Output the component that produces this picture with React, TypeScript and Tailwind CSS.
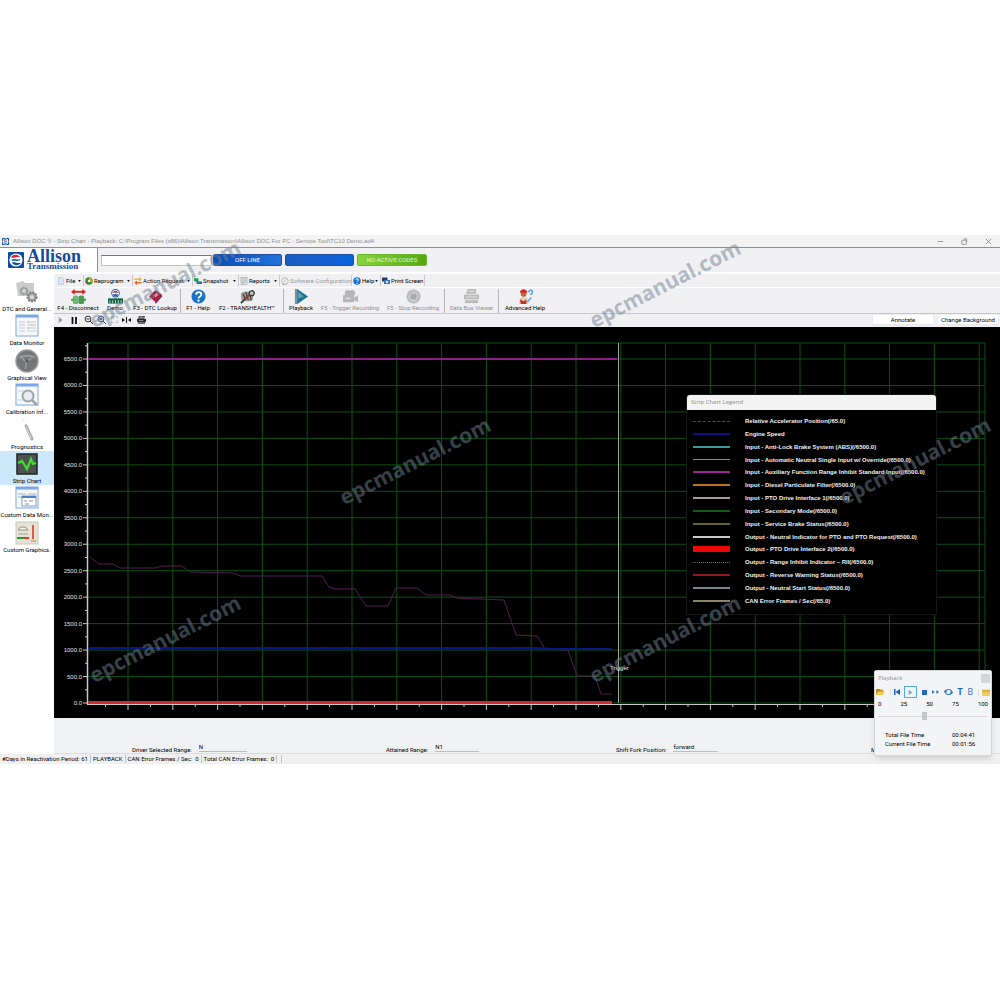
import React from "react";

function Watermark({ pos }: { pos: string }) {
  return (
    <span
      aria-hidden="true"
      className={
        "pointer-events-none absolute z-20 w-[180px] -translate-x-1/2 -translate-y-1/2 -rotate-[27deg] text-center font-['Noto_Sans'] text-[21px] leading-none font-bold whitespace-nowrap text-[#708090]/50 " +
        pos
      }
    >
      epcmanual.com
    </span>
  );
}

/* ---------- small drawings ---------- */

function Globe({ className }: { className: string }) {
  return (
    <svg viewBox="0 0 16 16" className={className}>
      <rect width="16" height="16" rx="1" fill="#0b4ea2" />
      <circle cx="8" cy="8" r="6.6" fill="#fff" />
      <path d="M3 5.500c2-4 8-3 9 0-3-1.600-5 1-9 0z" fill="#d8203a" />
      <path d="M4 10.500c2 4 8 3 9 0-3 1.600-6-1-9 0z" fill="#0b4ea2" />
      <path d="M4 8.500c2-2 5 1 8-1" stroke="#0b4ea2" strokeWidth="1.500" fill="none" />
    </svg>
  );
}

function Gears() {
  return (
    <svg viewBox="0 0 24 24" className="size-6 shrink-0">
      <path d="M1 3l7-2 2 2h9v13H3z" fill="#c9cac9" />
      <circle cx="9" cy="11" r="3.500" fill="#b4b6b6" stroke="#8b8d8d" strokeWidth="1.500" strokeDasharray="1.500 1" />
      <circle cx="9" cy="11" r="1.500" fill="#dcdcdc" />
      <circle cx="17" cy="17" r="4.500" fill="#9fa2a2" stroke="#7d7f7f" strokeWidth="2" strokeDasharray="2 1" />
      <circle cx="17" cy="17" r="2" fill="#ddd" />
    </svg>
  );
}

function Pane({ kind }: { kind: "list" | "search" | "nested" }) {
  return (
    <svg viewBox="0 0 24 24" className="size-6 shrink-0">
      <rect x="1" y="1" width="22" height="21" fill="#f5f7fb" stroke="#8fb4e6" strokeWidth="1.200" />
      <rect x="1" y="1" width="22" height="2.500" fill="#78a8ea" />
      {kind === "list" && (
        <g stroke="#c5c9d0">
          <path d="M4 8h6M4 11h6M4 14h6M4 17h6M12 8h9M12 11h9M12 14h9M12 17h9" />
          <path d="M12 8h2M16 11h2M12 14h3" stroke="#e4b877" />
        </g>
      )}
      {kind === "search" && (
        <g>
          <path d="M3 8h8M3 17h7" stroke="#c5c9d0" />
          <circle cx="13" cy="13" r="5.500" fill="#e9eef2" stroke="#a0a4a8" strokeWidth="2" />
          <path d="M17 17l5 5" stroke="#a0a4a8" strokeWidth="2.500" />
        </g>
      )}
      {kind === "nested" && (
        <g>
          <path d="M3 8h8M13 8h8M3 11h5" stroke="#a9aeb8" />
          <rect x="7" y="10" width="14" height="10" fill="#fff" stroke="#7d9cc9" />
          <path d="M7 11h14" stroke="#4e7fc6" strokeWidth="2" />
          <path d="M9 15h3M14 15h4M10 18h4" stroke="#8b94a3" />
        </g>
      )}
    </svg>
  );
}

function Gauge() {
  return (
    <svg viewBox="0 0 24 24" className="size-6 shrink-0">
      <circle cx="12" cy="12" r="11" fill="#747577" stroke="#98999b" strokeWidth="1.500" />
      <path d="M4 9c3-3 13-3 16 0M12 12l5-3M11.500 12l-1 8M6 8l4 4" stroke="#a2a4a6" strokeWidth="1.400" fill="none" />
      <circle cx="12" cy="12" r="1.600" fill="#55565a" />
    </svg>
  );
}

function Probe() {
  return (
    <svg viewBox="0 0 24 24" className="size-6 shrink-0">
      <path d="M7 1l4 6" stroke="#b9bbbd" strokeWidth="1" strokeDasharray="1 2" />
      <path d="M11 8l6 13" stroke="#a5a7a9" strokeWidth="3" strokeLinecap="round" />
      <path d="M10.500 8l6 13" stroke="#e2e3e4" strokeWidth="1" />
    </svg>
  );
}

function Strip() {
  return (
    <svg viewBox="0 0 24 24" className="size-6 shrink-0">
      <rect x="2" y="2" width="20" height="20" fill="#4d5151" stroke="#1f2322" strokeWidth="1.500" />
      <path d="M3 11l4-2 5 8 4-10 2 5 3-1" fill="none" stroke="#42e02e" strokeWidth="2.200" />
    </svg>
  );
}

function Graphics() {
  return (
    <svg viewBox="0 0 24 24" className="size-6 shrink-0">
      <rect x="1" y="1" width="22" height="22" fill="#e4e3d6" stroke="#c9c8bb" />
      <path d="M3 9c2-4 8-4 10 0z" fill="#f5f4ea" stroke="#898a80" />
      <path d="M3 13h10" stroke="#a5a69c" />
      <path d="M2 17h6" stroke="#1c9a2d" strokeWidth="2" />
      <path d="M8 17h6" stroke="#e03a25" strokeWidth="2" />
      <path d="M18 4v14" stroke="#df5a4a" strokeWidth="2" />
      <path d="M16 20h5" stroke="#b7b05f" strokeWidth="1.500" />
    </svg>
  );
}

const toolIcons: Record<string, React.ReactNode> = {
  disconnect: (
    <g>
      <path d="M2.500 3h11" stroke="#e3231b" strokeWidth="2" />
      <path d="M0 3l4-3v6zM16 3l-4-3v6z" fill="#e3231b" />
      <rect x="2" y="7" width="6" height="9" rx="2" fill="#6cb971" />
      <rect x="8" y="7" width="6" height="9" rx="2" fill="#4a9b52" />
      <path d="M0 11.500h3M13 11.500h3" stroke="#4e9c53" strokeWidth="2" />
    </g>
  ),
  demo: (
    <g>
      <circle cx="8" cy="4.500" r="4.500" fill="#1858a8" />
      <circle cx="8" cy="4.500" r="3.500" fill="#fff" />
      <path d="M5 4c1-3 5-3 6 0z" fill="#dd2740" />
      <path d="M5 5.500c1 3 5 3 6 0z" fill="#1858a8" />
      <rect x="0" y="10" width="16" height="5.500" fill="#135e43" />
      <path d="M2 12v3M5 12v3M8 12v3M11 12v3M14 12v3" stroke="#bfe3cf" strokeWidth="1" />
    </g>
  ),
  book: (
    <g>
      <path d="M1 8l7-7 7 5-7 8z" fill="#a51d3f" />
      <path d="M1 8l7 6v2L1 10z" fill="#e7d5da" />
      <path d="M8 14l7-8v2l-7 8z" fill="#6e0f28" />
      <path d="M6 7l3-3 2 2-3 3z" fill="#e38ba0" />
    </g>
  ),
  help: (
    <g>
      <circle cx="8" cy="8" r="7.500" fill="#1a72cf" />
      <path d="M5.500 6c0-3.500 5.500-3.300 5.500 0 0 2-3 2-3 4" fill="none" stroke="#fff" strokeWidth="1.900" />
      <circle cx="8" cy="12.500" r="1.200" fill="#fff" />
    </g>
  ),
  health: (
    <g>
      <rect x="1" y="3" width="13" height="10" rx="4" fill="#9b9d9d" />
      <path d="M3 5l3 6M6 3l3 9M10 3l2 9" stroke="#444" strokeWidth="1.300" />
      <path d="M1 15L14 2" stroke="#333" strokeWidth="1.800" />
      <circle cx="12.500" cy="4.500" r="2.700" fill="#b9bcbc" stroke="#2b2b2b" strokeWidth="1.200" />
      <path d="M5 11l5-5" stroke="#d62f2f" strokeWidth="1.500" />
    </g>
  ),
  play: (
    <g>
      <path d="M1 0h3v16H1z" fill="#78929e" />
      <path d="M3.500 0L15 8 3.500 16z" fill="#1d7390" />
      <path d="M4.500 3l6 5-6 2z" fill="#5aa4ba" />
    </g>
  ),
  camera: (
    <g fill="#b5b6b7">
      <circle cx="5" cy="4" r="3" />
      <circle cx="10" cy="4" r="3" />
      <rect x="0" y="6" width="12" height="8" rx="1" />
      <path d="M12 9l4-2v7l-4-2z" />
      <rect x="3" y="9" width="5" height="2" fill="#dadada" />
    </g>
  ),
  stop: (
    <g>
      <circle cx="8" cy="8" r="7.500" fill="#b9babb" />
      <circle cx="8" cy="8" r="5.500" fill="#c9caca" />
      <rect x="5" y="5" width="6" height="6" fill="#a9abac" />
    </g>
  ),
  bus: (
    <g fill="#b9babb">
      <path d="M4 0h9v5H2z" />
      <rect x="0" y="6" width="16" height="5" />
      <rect x="1" y="12" width="14" height="3" />
      <path d="M2 8.500h12M5 2.500h6" stroke="#e4e4e4" />
    </g>
  ),
  advanced: (
    <g>
      <path d="M1 16c0-11 10-11 10 0z" fill="#dcd3c6" />
      <circle cx="6" cy="5" r="3.200" fill="#b96b45" />
      <path d="M2 4c0-5 8-5 8 0z" fill="#d02c20" />
      <path d="M2 11l4 2 3-2v5H3z" fill="#c8321f" />
      <path d="M11.500 3.500c0-3 4-3 4 0 0 1.500-2 1.500-2 3M10 14l4-5" stroke="#5aa5e2" strokeWidth="1.600" fill="none" />
    </g>
  ),
};

const menuIcons: Record<string, React.ReactNode> = {
  file: <path d="M3 1h8l2 3v11H3z" fill="#dbe6f4" stroke="#9fb6d2" />,
  reprogram: (
    <g>
      <circle cx="8" cy="8" r="7.500" fill="#2a8b36" />
      <path d="M8 .5a7.500 7.500 0 016 11l-6-3.500z" fill="#e8a020" />
      <path d="M1 8h7l-3 6z" fill="#c23226" />
      <circle cx="8" cy="8" r="2.500" fill="#fff" />
    </g>
  ),
  action: (
    <g>
      <path d="M1 3h9V0l6 4.500L10 9V6H1z" fill="#f0b429" />
      <path d="M15 10H6V7l-6 4.500L6 16v-3h9z" fill="#e0672a" />
    </g>
  ),
  snapshot: (
    <g>
      <path d="M0 2l9 1v8L0 8z" fill="#23a04c" />
      <path d="M5 9h11v5H5z" fill="#2a6db5" />
    </g>
  ),
  reports: (
    <g>
      <rect x="2" y="1" width="12" height="14" fill="#eee" stroke="#888" />
      <path d="M4 4h8M4 7h3M4 10h8M9 7h3M4 12h5" stroke="#777" />
    </g>
  ),
  software: (
    <g fill="none" stroke="#aaa" strokeWidth="1.500">
      <circle cx="8" cy="8" r="6.500" />
      <path d="M5 11l6-7M2 15h9" />
    </g>
  ),
  help: toolIcons.help,
  print: (
    <g>
      <rect x="0" y="1" width="11" height="8" fill="#2d3e63" />
      <rect x="4" y="6" width="12" height="8" fill="#3b72c8" />
      <circle cx="10" cy="10" r="2.500" fill="#dce8f5" />
    </g>
  ),
};

/* ---------- window header ---------- */

function TitleBar() {
  return (
    <div className="flex h-[13px] items-center justify-between border-b border-[#8f8f8f] bg-[#f3f3f3] pr-2 pl-0.5 font-['Liberation_Sans']">
      <div className="flex items-center gap-0.5">
        <Globe className="size-[7px]" />
        <h1 className="pl-[2px] text-[6px] whitespace-pre text-[#8c8c8c]">
          Allison DOC ® - Strip Chart - Playback: C:\Program Files (x86)\Allison Transmission\Allison DOC For PC - Service Tool\TC10 Demo.ad4
        </h1>
      </div>
      <div className="flex gap-[17px] text-[#8a8a8a]">
        <button aria-label="Minimize">
          <svg viewBox="0 0 8 8" className="size-[7px]"><path d="M1 4h6" stroke="currentColor" /></svg>
        </button>
        <button aria-label="Restore">
          <svg viewBox="0 0 8 8" className="size-[7px]" fill="none" stroke="currentColor"><rect x="1" y="2.500" width="5" height="5" rx="1" /><path d="M3 1h3.500v4" /></svg>
        </button>
        <button aria-label="Close">
          <svg viewBox="0 0 8 8" className="size-[7px]"><path d="M1 1l6 6M7 1L1 7" stroke="currentColor" /></svg>
        </button>
      </div>
    </div>
  );
}

function Header() {
  return (
    <header className="flex h-6 bg-white">
      <div className="flex w-[97px] shrink-0 items-center gap-[3px] pl-2">
        <Globe className="size-4" />
        <div className="font-['Liberation_Serif'] font-bold text-[#174a9c]">
          <div className="text-[18px] leading-[13px]">Allison</div>
          <div className="text-[9px] leading-[7px]">Transmission</div>
        </div>
      </div>
      <div className="flex flex-1 items-center border-l border-[#8f8f8f] bg-[#f0f0f2] pl-[3px]">
        <input aria-label="Vehicle" className="mr-px h-[11px] w-[111px] border border-[#c4c4c4] border-t-[#777] bg-white text-[6px]" />
        <button className="mr-[3px] h-3 w-[69px] rounded-[2px] border border-[#1c4fa5] bg-linear-to-r from-[#0c4db5] to-[#2272dc] text-[6px] leading-[10px] text-white">OFF LINE</button>
        <button aria-label="Connection" className="mr-[3px] h-3 w-[69px] rounded-[2px] border border-[#1c4fa5] bg-linear-to-r from-[#1c5dc0] to-[#0764e0]" />
        <button className="h-3 w-[70px] rounded-[2px] border border-[#67b52a] bg-linear-to-r from-[#86d53c] to-[#55a80a] text-[6px] leading-[10px] text-[#e4f7d2]">NO ACTIVE CODES</button>
      </div>
    </header>
  );
}

const menus = [
  { icon: "file", label: "File", w: "w-7", arrow: true },
  { icon: "reprogram", label: "Reprogram", w: "w-[49px]", arrow: true },
  { icon: "action", label: "Action Request", w: "w-[60px]", arrow: true },
  { icon: "snapshot", label: "Snapshot", w: "w-[46px]", arrow: true },
  { icon: "reports", label: "Reports", w: "w-[41px]", arrow: true },
  { icon: "software", label: "Software Configuration", w: "w-[72px]", off: true },
  { icon: "help", label: "Help", w: "w-[29px]", arrow: true },
  { icon: "print", label: "Print Screen", w: "w-[44px]" },
];

function MenuBar() {
  return (
    <nav className="flex h-[14px] items-center border-b border-white bg-[#f0f0f2] pl-[2px]">
      {menus.map((m) => (
        <button
          key={m.label}
          className={
            "flex h-[11px] items-center border-r border-[#c9c9cc] pl-px text-[6px] whitespace-nowrap " +
            m.w +
            (m.off ? " text-[#999]" : " text-black")
          }
        >
          <svg viewBox="0 0 16 16" className="mr-px size-2 shrink-0">{menuIcons[m.icon]}</svg>
          {m.label}
          {m.arrow && (
            <svg viewBox="0 0 4 3" className="mr-[2px] ml-auto h-[2px] w-[3px] shrink-0"><path d="M0 0h4L2 3z" fill="#111" /></svg>
          )}
        </button>
      ))}
    </nav>
  );
}

type Tool = { icon: string; label: string; w: string; off?: boolean };
const tools: Tool[][] = [
  [
    { icon: "disconnect", label: "F4 - Disconnect", w: "w-10" },
    { icon: "demo", label: "Demo", w: "w-[34px]" },
    { icon: "book", label: "F3 - DTC Lookup", w: "w-[46px]" },
  ],
  [
    { icon: "help", label: "F1 - Help", w: "w-[30px]" },
    { icon: "health", label: "F2 - TRANSHEALTH™", w: "w-[68px]" },
  ],
  [
    { icon: "play", label: "Playback", w: "w-[30px]" },
    { icon: "camera", label: "F5 - Trigger Recording", w: "w-[68px]", off: true },
    { icon: "stop", label: "F5 - Stop Recording", w: "w-[58px]", off: true },
  ],
  [{ icon: "bus", label: "Data Bus Viewer", w: "w-[49px]", off: true }],
  [{ icon: "advanced", label: "Advanced Help", w: "w-[48px]" }],
];

function ToolBar() {
  return (
    <div className="flex h-[26px] items-start border-b border-[#c6c6c8] bg-[#f0f0f2] pt-px pl-[2px]">
      {tools.map((group, i) => (
        <div key={i} className="flex border-r border-[#b4b4b6] px-[2px] last:border-r-0">
          {group.map((t) => (
            <button key={t.label} className={"flex h-6 flex-col items-center text-[6px] leading-[7px] whitespace-nowrap " + t.w + (t.off ? " text-[#8f8f8f]" : " text-black")}>
              <svg viewBox="0 0 16 16" className="size-[15px] shrink-0">{toolIcons[t.icon]}</svg>
              {t.label}
            </button>
          ))}
        </div>
      ))}
    </div>
  );
}

function ChartControls() {
  return (
    <div className="flex h-[13px] items-center bg-[#f0f0f2] pr-[2px] pb-[2px] pl-1">
      <button aria-label="Play" className="mr-[6px]">
        <svg viewBox="0 0 8 8" className="size-[6px]"><path d="M1 0l5 4-5 4z" fill="#999" /></svg>
      </button>
      <button aria-label="Pause" className="mr-[6px]">
        <svg viewBox="0 0 8 8" className="size-2"><path d="M2.500 1v7M6 1v7" stroke="#111" strokeWidth="1.800" /></svg>
      </button>
      {["Zoom out", "Zoom in"].map((n, i) => (
        <button key={n} aria-label={n} className="mr-[4px]">
          <svg viewBox="0 0 9 9" className="size-[9px]" fill="none" stroke={i ? "#35437a" : "#333"}>
            <circle cx="4" cy="4" r="2.900" />
            <path d={i ? "M6 6l3 3M2.500 4h3M4 2.500v3" : "M6 6l3 3M2.500 4h3"} />
          </svg>
        </button>
      ))}
      <button aria-label="Select" className="mr-[4px] ml-px size-[7px] border border-dashed border-[#bbb]" />
      <button aria-label="Fit width" className="mr-[6px]">
        <svg viewBox="0 0 9 8" className="h-2 w-[9px]"><path d="M4.500 1v6" stroke="#111" /><path d="M0 2l3 2-3 2zM9 2L6 4l3 2z" fill="#111" /></svg>
      </button>
      <button aria-label="Print">
        <svg viewBox="0 0 10 9" className="h-2 w-[9px]"><path d="M2 0h7L8 3H1z" fill="#555" /><rect y="3" width="10" height="4" rx="1" fill="#222" /><path d="M1 7h8v2H1z" fill="#666" /><path d="M3 1.500h4M2 5h5" stroke="#ddd" strokeWidth=".7" /></svg>
      </button>
      <div className="ml-auto flex gap-[5px] text-[6px]">
        <button className="h-[9px] w-[60px] bg-white leading-[9px] shadow-xs">Annotate</button>
        <button className="h-[9px] w-[60px] bg-white leading-[9px] whitespace-nowrap shadow-xs">Change Background</button>
      </div>
    </div>
  );
}

/* ---------- sidebar ---------- */

const views: { label: string; icon: React.ReactNode; on?: boolean }[] = [
  { label: "DTC and General...", icon: <Gears /> },
  { label: "Data Monitor", icon: <Pane kind="list" /> },
  { label: "Graphical View", icon: <Gauge /> },
  { label: "Calibration Inf...", icon: <Pane kind="search" /> },
  { label: "Prognostics", icon: <Probe /> },
  { label: "Strip Chart", icon: <Strip />, on: true },
  { label: "Custom Data Mon...", icon: <Pane kind="nested" /> },
  { label: "Custom Graphics.", icon: <Graphics /> },
];

function Sidebar() {
  return (
    <aside className="w-[54px] shrink-0 bg-white pt-[6px]">
      <div className="grid h-[275px] grid-rows-8">
        {views.map((v) => (
          <button
            key={v.label}
            className={"flex w-full flex-col items-center gap-px pt-px text-[6px] leading-[7px] whitespace-nowrap " + (v.on ? "bg-[#cde8fb]" : "bg-white")}
          >
            {v.icon}
            {v.label}
          </button>
        ))}
      </div>
    </aside>
  );
}

/* ---------- chart ---------- */

const ZERO_Y = 376;
const STEP_Y = 26.46;
const FIRST_X = 74;
const STEP_X = 44.8;

const accelerator =
  "36,230 45,237 59,237 66,241 101,241 108,239 128,239 136,245 179,246 186,249 268,249 275,260 281,262 301,262 312,279 334,279 342,261 363,261 372,268 396,268 402,271 450,273 462,308 483,309 491,322 514,323 523,349 541,349 547,367 558,367";

function StripChart() {
  const rows = Array.from({ length: 14 }, (_, i) => i);
  const cols = Array.from({ length: 20 }, (_, i) => i);
  return (
    <svg viewBox="0 0 946 391" className="block w-full bg-black" role="img" aria-label="Strip chart">
      <g stroke="#0a5214" strokeWidth="1">
        {rows.map((i) => (
          <path key={i} d={`M34 ${ZERO_Y - i * STEP_Y}H931`} />
        ))}
        <path d="M34 16H931M931 16V376" />
        {cols.map((i) => (
          <path key={i} d={`M${FIRST_X + i * STEP_X} 16V376`} />
        ))}
      </g>
      <g stroke="#c8c8c8" strokeWidth="1">
        <path d="M33.500 16V377" strokeWidth="1.500" />
        <path d="M33 377.500H931" />
        {rows.map((i) => (
          <path key={i} d={`M29 ${ZERO_Y - i * STEP_Y}h4M31 ${ZERO_Y - (i + 0.5) * STEP_Y}h2`} />
        ))}
        {cols.map((i) => (
          <path key={i} d={`M${FIRST_X + i * STEP_X} 378v5M${FIRST_X + (i - 0.5) * STEP_X} 378v2`} />
        ))}
      </g>
      <g fill="#e2e2e2" fontSize="6" textAnchor="end" fontFamily="Liberation Sans, sans-serif">
        {rows.map((i) => (
          <text key={i} x="28" y={ZERO_Y - i * STEP_Y + 2}>{(i * 500).toFixed(1)}</text>
        ))}
      </g>
      <path d="M34 32H563" stroke="#8a228a" strokeWidth="2" />
      <polyline points={accelerator} fill="none" stroke="#581a54" strokeWidth="1" />
      <path d="M34 321H480L500 322H558" fill="none" stroke="#0c1684" strokeWidth="2" />
      <path d="M34 375.500H558" stroke="#cf2a30" strokeWidth="3" />
      <path d="M564.500 16V376" stroke="#a9a4a9" strokeWidth="1" />
      <text x="556" y="343" fill="#f0f0f0" fontSize="6" fontFamily="Liberation Sans, sans-serif">Trigger</text>
    </svg>
  );
}

const legend = [
  { label: "Relative Accelerator Position(/65.0)", line: "h-0 border-t border-dashed border-[#8c208e]" },
  { label: "Engine Speed", line: "h-[2px] bg-[#0e0e8c]" },
  { label: "Input - Anti-Lock Brake System (ABS)(/6500.0)", line: "h-[2px] bg-[#3d9a98]" },
  { label: "Input - Automatic Neutral Single Input w/ Override(/6500.0)", line: "h-px bg-[#8b8b84]" },
  { label: "Input - Auxiliary Function Range Inhibit Standard Input(/6500.0)", line: "h-[2px] bg-[#a121a1]" },
  { label: "Input - Diesel Particulate Filter(/6500.0)", line: "h-[2px] bg-[#b87423]" },
  { label: "Input - PTO Drive Interface 1(/6500.0)", line: "h-[2px] bg-[#a5999d]" },
  { label: "Input - Secondary Mode(/6500.0)", line: "h-[2px] bg-[#155c19]" },
  { label: "Input - Service Brake Status(/6500.0)", line: "h-[2px] bg-[#66622b]" },
  { label: "Output - Neutral Indicator for PTO and PTO Request(/6500.0)", line: "h-[2px] bg-[#c9c9c9]" },
  { label: "Output - PTO Drive Interface 2(/6500.0)", line: "h-[6px] bg-[#f00606]" },
  { label: "Output - Range Inhibit Indicator – RII(/6500.0)", line: "h-0 border-t border-dotted border-[#e03c3c]" },
  { label: "Output - Reverse Warning Status(/6500.0)", line: "h-[2px] bg-[#8f1b1f]" },
  { label: "Output - Neutral Start Status(/6500.0)", line: "h-[2px] bg-[#7a878d]" },
  { label: "CAN Error Frames / Sec(/65.0)", line: "h-[2px] bg-[#8f8466]" },
];

function Legend() {
  return (
    <section className="absolute top-[67px] right-[63px] z-10 w-[251px] rounded-t-[3px] border border-[#141914] bg-black">
      <h2 className="h-[15px] rounded-t-[3px] bg-[#f3f4f3] pl-1 font-['Open_Sans'] text-[6px] leading-[14px] text-[#8a8a8a]">Strip Chart Legend</h2>
      <ul className="flex h-[204px] flex-col justify-between pt-[7px] pb-[9px] pl-[6px]">
        {legend.map((l) => (
          <li key={l.label} className="flex items-center font-['Liberation_Sans'] text-[6px] leading-[8px] font-bold whitespace-nowrap text-[#f0f0f0]">
            <span className={"mr-[15px] w-[37px] shrink-0 " + l.line} />
            {l.label}
          </li>
        ))}
      </ul>
    </section>
  );
}

function PlaybackWindow() {
  return (
    <section className="absolute right-2 bottom-2 z-30 w-[118px] rounded-[2px] border border-[#d4d6d8] bg-[#f3f4f5] shadow-md">
      <div className="flex h-[14px] items-center justify-between pr-px pl-[3px]">
        <h2 className="font-['Open_Sans'] text-[6px] text-[#8c8c8c]">Playback</h2>
        <button aria-label="Close playback" className="size-[9px] bg-[#d3d6d8]" />
      </div>
      <div className="flex h-[14px] items-center justify-between px-px text-[#1e63c4]">
        <button aria-label="Open">
          <svg viewBox="0 0 10 9" className="h-2 w-[9px]"><path d="M0 1h4l1 1h3v6H0z" fill="#b98a1c" /><path d="M2 4h8L8 8H0z" fill="#f4cd55" /></svg>
        </button>
        <button aria-label="First" className="border-l border-[#ddd] pl-[3px]">
          <svg viewBox="0 0 8 8" className="size-[6px]" fill="currentColor"><path d="M0 0h2v8H0zM8 0v8L2 4z" /></svg>
        </button>
        <button aria-label="Play file" className="flex h-3 w-[13px] items-center justify-center border border-[#5aa5e0] bg-[#eaf5fd]">
          <svg viewBox="0 0 8 8" className="size-[5px]"><path d="M1 0l6 4-6 4z" fill="#8aa0b2" /></svg>
        </button>
        <button aria-label="Stop file" className="size-[5px] bg-[#2767bd]" />
        <button aria-label="Step">
          <svg viewBox="0 0 8 4" className="h-[4px] w-[7px]" fill="currentColor"><path d="M0 0l3 2-3 2zM5 0l3 2-3 2z" /></svg>
        </button>
        <button aria-label="Loop">
          <svg viewBox="0 0 10 8" className="h-2 w-[9px]" fill="none" stroke="#3f7ed6" strokeWidth="1.300"><ellipse cx="5" cy="4" rx="3.500" ry="2.800" /><path d="M0 4l1.500-1.500L3 4M7 4l1.500 1.500L10 4" /></svg>
        </button>
        <button className="text-[9px] leading-none font-bold">T</button>
        <button className="text-[9px] leading-none text-[#3f79c8]">B</button>
        <button aria-label="Notes" className="border-l border-[#ddd] pl-[3px]">
          <svg viewBox="0 0 9 8" className="h-[7px] w-2"><rect y="1" width="9" height="7" fill="#f0cd62" /><path d="M0 1h9v2H0z" fill="#d9a93a" /></svg>
        </button>
      </div>
      <div className="flex h-[9px] justify-between px-[3px] text-[6px] leading-[9px]">
        {["0", "25", "50", "75", "100"].map((n) => (
          <span key={n}>{n}</span>
        ))}
      </div>
      <div className="flex h-3 items-end px-1">
        <input
          type="range"
          aria-label="Playback position"
          defaultValue={42}
          className="h-2 w-full appearance-none bg-transparent [&::-webkit-slider-runnable-track]:h-px [&::-webkit-slider-runnable-track]:bg-[#dadada] [&::-webkit-slider-thumb]:-mt-1 [&::-webkit-slider-thumb]:h-2 [&::-webkit-slider-thumb]:w-[5px] [&::-webkit-slider-thumb]:appearance-none [&::-webkit-slider-thumb]:bg-[#c4c6c8]"
        />
      </div>
      <dl className="mt-[10px] grid h-[25px] grid-cols-[67px_1fr] content-start pl-[10px] text-[6px] leading-[9px]">
        <dt>Total File Time</dt>
        <dd>00:04:41</dd>
        <dt>Current File Time</dt>
        <dd>00:01:56</dd>
      </dl>
    </section>
  );
}

/* ---------- bottom ---------- */

function Readout({ id, label, value, className, box }: { id: string; label: string; value: string; className: string; box: string }) {
  return (
    <div className={"flex shrink-0 items-end " + className}>
      <label htmlFor={id} className="mr-[7px] text-[6px] leading-[7px] whitespace-nowrap">{label}</label>
      <input id={id} readOnly defaultValue={value} className={"mb-px h-[9px] border-b border-[#bdbdc0] bg-transparent pb-[2px] text-[6px] leading-[7px] " + box} />
    </div>
  );
}

function Readouts() {
  return (
    <div className="flex h-9 items-end overflow-hidden border-b border-[#dcdcde] bg-[#f0f1f3] pl-[78px] text-black">
      <Readout id="selected" label="Driver Selected Range:" value="N" className="w-[254px]" box="w-[48px]" />
      <Readout id="attained" label="Attained Range:" value="N1" className="w-[230px]" box="w-[44px]" />
      <Readout id="fork" label="Shift Fork Position:" value="forward" className="w-[255px]" box="w-[45px]" />
      <Readout id="mode" label="Mode:" value="" className="" box="w-[44px]" />
    </div>
  );
}

function StatusBar() {
  return (
    <footer className="flex h-[10px] items-center gap-[2px] bg-[#f0f0f1] pl-[2px] text-[6px] leading-[8px] whitespace-nowrap text-black">
      {["#Days in Reactivation Period: 61", "PLAYBACK", "CAN Error Frames / Sec:  0", "Total CAN Error Frames:  0", ""].map((t, i) => (
        <span key={i} className="h-2 border-r border-[#c3c3c6] pr-[2px] whitespace-pre">{t}</span>
      ))}
    </footer>
  );
}

export default function App() {
  return (
    <div className="min-h-screen bg-white pt-[235px] font-['Roboto',sans-serif]">
      <main className="relative">
        <TitleBar />
        <Header />
        <div className="flex pt-px">
          <Sidebar />
          <div className="min-w-0 flex-1 pt-px">
            <MenuBar />
            <ToolBar />
            <ChartControls />
            <div className="relative">
              <StripChart />
              <Legend />
            </div>
            <Readouts />
          </div>
        </div>
        <StatusBar />
        <PlaybackWindow />
        <Watermark pos="left-[16.5%] top-[49px]" />
        <Watermark pos="left-[66.5%] top-[49px]" />
        <Watermark pos="left-[41.5%] top-[226px]" />
        <Watermark pos="left-[91.5%] top-[226px]" />
        <Watermark pos="left-[16.5%] top-[404px]" />
        <Watermark pos="left-[66.5%] top-[404px]" />
      </main>
    </div>
  );
}
